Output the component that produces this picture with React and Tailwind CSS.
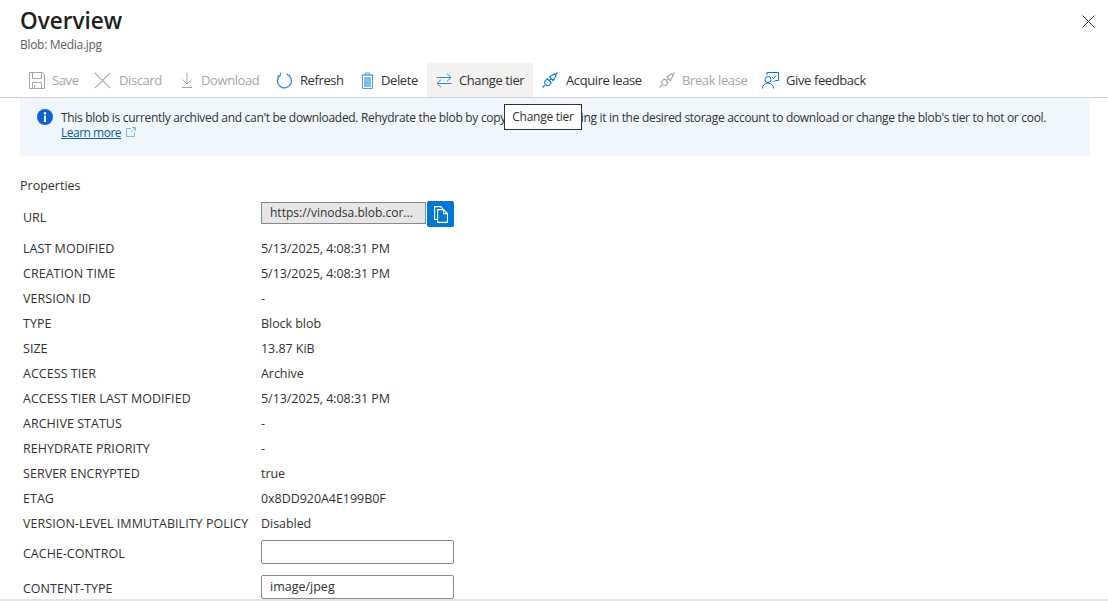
import React from "react";

const Save = () => (
  <svg width="16" height="17" viewBox="0 0 16 17" fill="none" stroke="#a6a6a6" strokeWidth="1">
    <path d="M.5.5h13l2 2v14H.5z" />
    <path d="M3.500.5v6h9v-6M3.500 16.500v-6h9v6M5.500 13v3" />
  </svg>
);
const Discard = () => (
  <svg width="17" height="17" viewBox="0 0 17 17" fill="none" stroke="#a6a6a6" strokeWidth="1.100">
    <path d="M.8.8l15.400 15.400M16.200.8L.8 16.200" />
  </svg>
);
const Download = () => (
  <svg width="14" height="16" viewBox="0 0 14 16" fill="none" stroke="#a6a6a6" strokeWidth="1">
    <path d="M7 .5v11M2.500 7.500L7 12l4.500-4.500" />
    <path d="M2 15.500h10" strokeWidth="1" />
  </svg>
);
const Refresh = () => (
  <svg width="17" height="17" viewBox="0 0 17 17" fill="none" stroke="#2b88d8" strokeWidth="1.300">
    <path d="M10.500 2.200A7 7 0 1 1 3.600 3.800" />
    <path d="M4.400.6v3.300H1.200" strokeWidth="1" />
  </svg>
);
const Trash = () => (
  <svg width="13" height="17" viewBox="0 0 13 17" fill="none" stroke="#4ea1e0" strokeWidth="1">
    <path d="M.5 3h12M4.500 3V1h4v2" />
    <path d="M1.500 3h10v13.500h-10z" />
    <rect x="3" y="5" width="7" height="10" fill="#83bdea" stroke="none" />
  </svg>
);
const Swap = () => (
  <svg width="16" height="15" viewBox="0 0 16 15" fill="none" stroke="#2b88d8" strokeWidth="1">
    <path d="M.5 4.500h14.500M11 .7l4 3.800-4 3.800" />
    <path d="M15.500 10.500H1M5 6.700l-4 3.800 4 3.800" />
  </svg>
);
const Lease = ({ c = "#0078d4" }) => (
  <svg width="16" height="16" viewBox="0 0 16 16" fill="none" stroke={c} strokeWidth="1.100">
    <path d="M.5 15.500l2.500-2.500M6.800 9.200l2.400-2.400M13 3l2.500-2.500" />
    <path d="M5.500 6.800l3.700 3.700-1.600 2.300a2.400 2.400 0 0 1-3 .5L3 11.700a2.400 2.400 0 0 1 .3-3z" />
    <path d="M9.300 3.700l3-1.800 1.800 1.800-1.800 3-1.100 1.800-3.600-3.600z" />
  </svg>
);
const Feedback = () => (
  <svg width="17" height="17" viewBox="0 0 17 17" fill="none" stroke="#0078d4" strokeWidth="1">
    <path d="M5 3V.5h11.500v8h-3.300l-1.500 1.500" />
    <path d="M10 5l1.500 1.500L14 3.500" />
    <circle cx="6" cy="7.500" r="3" />
    <path d="M.5 16.500c0-3.200 2.400-5.300 5.500-5.300s5.500 2.100 5.500 5.300" />
  </svg>
);
const Copy = () => (
  <svg width="14" height="17" viewBox="0 0 14 17" fill="none" stroke="#ffffff" strokeWidth="1.100">
    <path d="M3.500 13.500H.6V.6h6.200L9 3" />
    <path d="M3.600 3.600h5.900l3.900 3.900v8.900H3.600z" />
    <path d="M9.500 3.600v4h3.900" />
  </svg>
);

const Btn = ({ icon, label, disabled, active, gap, className = "" }) => (
  <div className={`flex items-center h-[34px] ${active ? "bg-[#f3f2f1]" : ""} ${className}`}>
    <span className="flex w-[17px] justify-center shrink-0">{icon}</span>
    <span className={`text-[13px] tracking-[-0.4px] pt-px whitespace-nowrap ${gap} ${disabled ? "text-[#a6a6a6]" : "text-[#323130]"}`}>{label}</span>
  </div>
);

const rows1 = [
  ["LAST MODIFIED", "5/13/2025, 4:08:31 PM"],
  ["CREATION TIME", "5/13/2025, 4:08:31 PM"],
  ["VERSION ID", "-"],
  ["TYPE", "Block blob"],
  ["SIZE", "13.87 KiB"],
  ["ACCESS TIER", "Archive"],
  ["ACCESS TIER LAST MODIFIED", "5/13/2025, 4:08:31 PM"],
  ["ARCHIVE STATUS", "-"],
  ["REHYDRATE PRIORITY", "-"],
  ["SERVER ENCRYPTED", "true"],
  ["ETAG", "0x8DD920A4E199B0F"],
  ["VERSION-LEVEL IMMUTABILITY POLICY", "Disabled"],
];

export default function App() {
  return (
    <div className="relative w-[1108px] h-[601px] overflow-hidden bg-white text-[#323130] font-['Open_Sans',sans-serif]">
      <div className="flex justify-between pl-5 pr-[13px] h-[63px]">
        <div className="flex flex-col">
          <h1 className="text-[22.5px] leading-7 font-semibold text-[#201f1e] mt-[7px]">Overview</h1>
          <p className="text-[12px] leading-4 text-[#605e5c] mt-[2px] tracking-[-0.3px]">Blob: Media.jpg</p>
        </div>
        <svg className="mt-[15px]" width="13" height="13" viewBox="0 0 13 13" fill="none" stroke="#323130" strokeWidth="1">
          <path d="M.5.5l12 12M12.500.5l-12 12" />
        </svg>
      </div>

      <div className="flex h-[35px] border-b border-[#d2d0ce] pl-[28px]">
        <Btn icon={<Save />} label="Save" gap="ml-[7px]" disabled className="w-[66px]" />
        <Btn icon={<Discard />} label="Discard" gap="ml-[8px]" disabled className="w-[84px]" />
        <Btn icon={<Download />} label="Download" gap="ml-[6px]" disabled className="w-[98px]" />
        <Btn icon={<Refresh />} label="Refresh" gap="ml-[7px]" className="w-[83px]" />
        <Btn icon={<Trash />} label="Delete" gap="ml-[5px]" className="w-[68px]" />
        <Btn icon={<Swap />} label="Change tier" gap="ml-[7px]" active className="w-[106px] pl-[8px]" />
        <Btn icon={<Lease />} label="Acquire lease" gap="ml-[8px]" className="w-[125px] pl-[8px]" />
        <Btn icon={<Lease c="#a6a6a6" />} label="Break lease" gap="ml-[7px]" disabled className="w-[104px]" />
        <Btn icon={<Feedback />} label="Give feedback" gap="ml-[7px]" />
      </div>

      <div className="ml-5 mr-[18px] h-[58px] bg-[#eff6fe] flex pl-[17px] pt-[11px]">
        <svg className="shrink-0" width="16" height="16" viewBox="0 0 16 16">
          <circle cx="8" cy="8" r="8" fill="#0f62d6" />
          <circle cx="8" cy="4.300" r="1.200" fill="#fff" />
          <rect x="7" y="6.500" width="2" height="6.500" fill="#fff" />
        </svg>
        <div className="ml-2 text-[12px] leading-[15px] pt-px whitespace-nowrap">
          <div className="tracking-[-0.305px]">This blob is currently archived and can't be downloaded. Rehydrate the blob by copying it or changing it in the desired storage account to download or change the blob's tier to hot or cool.</div>
          <div className="flex items-center">
            <a className="underline text-[#0b5a9c] tracking-[-0.5px]">Learn more</a>
            <svg className="ml-[5px] mb-[2px]" width="10" height="10" viewBox="0 0 10 10" fill="none" stroke="#6ea6d6" strokeWidth=".8">
              <path d="M5 1.500H.5v8h8V5M5 5l4.500-4.500M6 .5h3.500V4" />
            </svg>
          </div>
        </div>
      </div>

      <div className="absolute left-[504px] top-[104px] w-[78px] h-[26px] bg-white border border-[#323130] text-[12px] leading-[23px] text-center text-[#323130] tracking-[-0.25px]">Change tier</div>

      <div className="px-5 mt-[21px]">
        <div className="text-[12.5px] leading-[18px] mb-[6px]">Properties</div>
        <div className="flex flex-col pl-[3px] text-[12.5px]">
          <div className="flex items-start h-[36px]">
            <div className="w-[238px] mt-[8px]">URL</div>
            <div className="flex items-start gap-px">
              <div className="w-[165px] h-[22px] mt-px bg-[#e6e6e6] border border-[#8a8886] px-2 leading-[20px] whitespace-nowrap overflow-hidden text-[12px]">https://vinodsa.blob.cor...</div>
              <div className="w-[27px] h-[26px] bg-[#0078d4] rounded-[2px] flex items-center justify-center"><Copy /></div>
            </div>
          </div>
          {rows1.map(([k, v]) => (
            <div key={k} className="flex h-[25px] items-center whitespace-nowrap">
              <div className="w-[238px] tracking-[0.04px]">{k}</div>
              <div className="tracking-[-0.05px]">{v}</div>
            </div>
          ))}
          <div className="flex h-[35px] items-center -mt-[3px]">
            <div className="w-[238px] pt-[5px]">CACHE-CONTROL</div>
            <div className="w-[193px] h-[24px] bg-white border border-[#8a8886] rounded-[2px]" />
          </div>
          <div className="flex h-[35px] items-center">
            <div className="w-[238px] pt-[5px]">CONTENT-TYPE</div>
            <div className="w-[193px] h-[24px] bg-white border border-[#8a8886] rounded-[2px] px-2 leading-[22px]">image/jpeg</div>
          </div>
        </div>
      </div>
      <div className="absolute left-0 right-0 bottom-0 h-[2px] bg-[#e6e6e6]" />
    </div>
  );
}
